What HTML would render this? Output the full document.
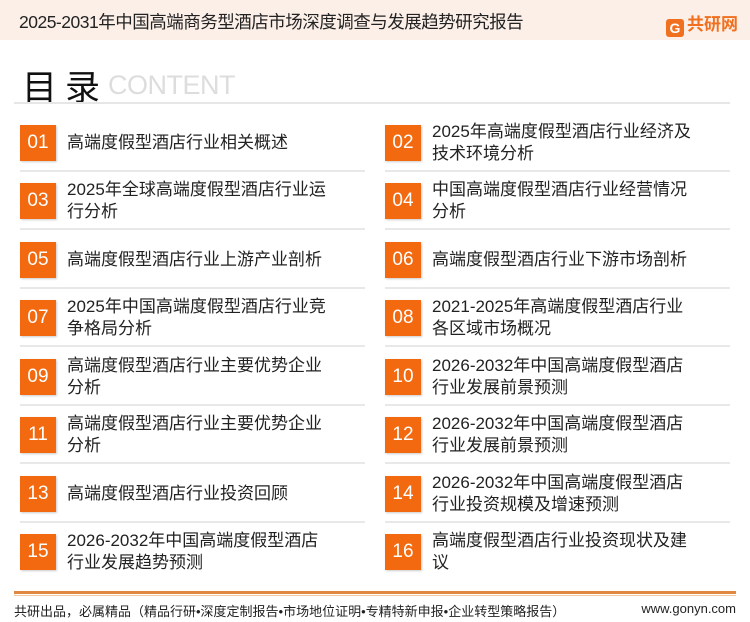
<!DOCTYPE html>
<html><head><meta charset="utf-8"><style>
*{margin:0;padding:0;box-sizing:border-box}
body{width:750px;height:622px;background:#fff;font-family:"Liberation Sans","Noto Sans CJK SC",sans-serif;position:relative;overflow:hidden;color:#111}
.hd{position:absolute;left:0;top:0;width:750px;height:40px;background:#fbefe8}
.hd .t{position:absolute;left:19px;top:9px;font-size:17.5px;color:#222;letter-spacing:-0.5px}
.logo{position:absolute;right:12px;top:10px;font-size:17px;font-weight:bold;color:#f07020}
.logo span{display:inline-block;width:18px;height:18px;background:#f07020;border-radius:3px;vertical-align:-3px;margin-right:3px;color:#fff;font-size:14px;text-align:center;line-height:18px}
.ml{position:absolute;left:22px;top:60px;font-size:35px;color:#111;letter-spacing:8px}
.ct{position:absolute;left:108px;top:70px;font-size:27px;color:#ddd;letter-spacing:-0.5px}
.dv{position:absolute;left:14px;top:102px;width:716px;height:2px;background:#e6e6e6}
.it{position:absolute;width:345px;height:58px}
.it .b{position:absolute;left:0;top:0;width:36px;height:36px;background:#f2690f;color:#fff;font-size:19px;text-align:center;line-height:36px;box-shadow:1px 1px 2px #ccc}
.it .x{position:absolute;left:47px;top:0;height:36px;display:flex;align-items:center;font-size:17px;line-height:22px;color:#222;white-space:nowrap}
.it .l{position:absolute;left:0;top:45px;width:345px;height:2px;background:#e8e8e8}
.fl{position:absolute;left:14px;top:591px;width:722px;height:3px;background:#e08840}
.fl2{position:absolute;left:14px;top:595px;width:722px;height:1px;background:#f0c8a0}
.ft{position:absolute;left:14px;top:601px;font-size:13px;color:#222}
.fr{position:absolute;right:14px;top:601px;font-size:13px;color:#222}
</style></head><body>
<div class="hd"><div class="t">2025-2031年中国高端商务型酒店市场深度调查与发展趋势研究报告</div><div class="logo"><span>G</span>共研网</div></div>
<div class="ml">目录</div><div class="ct">CONTENT</div>
<div class="dv"></div>

<div class="it" style="left:20px;top:125px"><div class="b">01</div><div class="x">高端度假型酒店行业相关概述</div><div class="l"></div></div>
<div class="it" style="left:385px;top:125px"><div class="b">02</div><div class="x">2025年高端度假型酒店行业经济及<br>技术环境分析</div><div class="l"></div></div>
<div class="it" style="left:20px;top:183px"><div class="b">03</div><div class="x">2025年全球高端度假型酒店行业运<br>行分析</div><div class="l"></div></div>
<div class="it" style="left:385px;top:183px"><div class="b">04</div><div class="x">中国高端度假型酒店行业经营情况<br>分析</div><div class="l"></div></div>
<div class="it" style="left:20px;top:242px"><div class="b">05</div><div class="x">高端度假型酒店行业上游产业剖析</div><div class="l"></div></div>
<div class="it" style="left:385px;top:242px"><div class="b">06</div><div class="x">高端度假型酒店行业下游市场剖析</div><div class="l"></div></div>
<div class="it" style="left:20px;top:300px"><div class="b">07</div><div class="x">2025年中国高端度假型酒店行业竞<br>争格局分析</div><div class="l"></div></div>
<div class="it" style="left:385px;top:300px"><div class="b">08</div><div class="x">2021-2025年高端度假型酒店行业<br>各区域市场概况</div><div class="l"></div></div>
<div class="it" style="left:20px;top:359px"><div class="b">09</div><div class="x">高端度假型酒店行业主要优势企业<br>分析</div><div class="l"></div></div>
<div class="it" style="left:385px;top:359px"><div class="b">10</div><div class="x">2026-2032年中国高端度假型酒店<br>行业发展前景预测</div><div class="l"></div></div>
<div class="it" style="left:20px;top:417px"><div class="b">11</div><div class="x">高端度假型酒店行业主要优势企业<br>分析</div><div class="l"></div></div>
<div class="it" style="left:385px;top:417px"><div class="b">12</div><div class="x">2026-2032年中国高端度假型酒店<br>行业发展前景预测</div><div class="l"></div></div>
<div class="it" style="left:20px;top:476px"><div class="b">13</div><div class="x">高端度假型酒店行业投资回顾</div><div class="l"></div></div>
<div class="it" style="left:385px;top:476px"><div class="b">14</div><div class="x">2026-2032年中国高端度假型酒店<br>行业投资规模及增速预测</div><div class="l"></div></div>
<div class="it" style="left:20px;top:534px"><div class="b">15</div><div class="x">2026-2032年中国高端度假型酒店<br>行业发展趋势预测</div></div>
<div class="it" style="left:385px;top:534px"><div class="b">16</div><div class="x">高端度假型酒店行业投资现状及建<br>议</div></div>

<div class="fl"></div><div class="fl2"></div>
<div class="ft">共研出品，必属精品（精品行研•深度定制报告•市场地位证明•专精特新申报•企业转型策略报告）</div>
<div class="fr">www.gonyn.com</div>
</body></html>
